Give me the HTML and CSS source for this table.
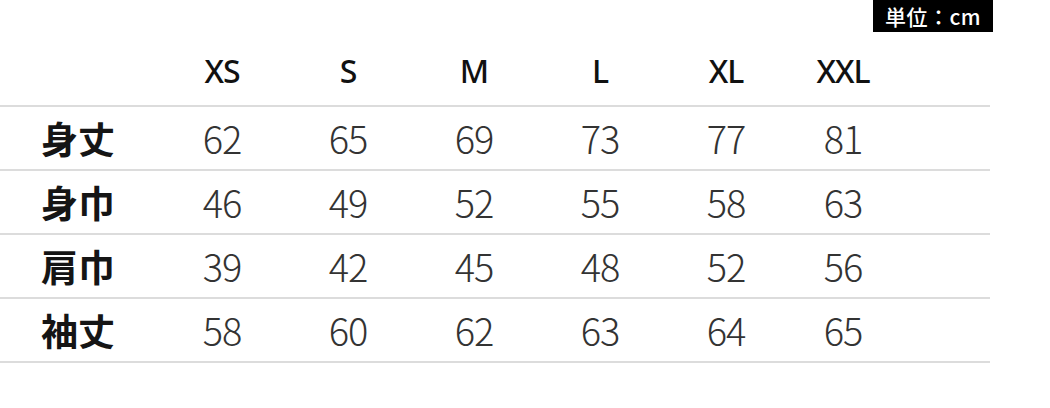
FILE: index.html
```html
<!DOCTYPE html>
<html lang="ja">
<head>
<meta charset="utf-8">
<link rel="stylesheet" href="styles.css">
</head>
<body>
<div class="page">
  <div class="unit-row"><span class="unit">単位：cm</span></div>
  <div class="table">
    <div class="row head">
      <div class="label"></div>
      <div class="cell">XS</div>
      <div class="cell">S</div>
      <div class="cell">M</div>
      <div class="cell">L</div>
      <div class="cell">XL</div>
      <div class="cell">XXL</div>
      <div></div>
    </div>
    <div class="row">
      <div class="label">身丈</div>
      <div class="cell">62</div><div class="cell">65</div><div class="cell">69</div>
      <div class="cell">73</div><div class="cell">77</div><div class="cell">81</div><div></div>
    </div>
    <div class="row">
      <div class="label">身巾</div>
      <div class="cell">46</div><div class="cell">49</div><div class="cell">52</div>
      <div class="cell">55</div><div class="cell">58</div><div class="cell">63</div><div></div>
    </div>
    <div class="row">
      <div class="label">肩巾</div>
      <div class="cell">39</div><div class="cell">42</div><div class="cell">45</div>
      <div class="cell">48</div><div class="cell">52</div><div class="cell">56</div><div></div>
    </div>
    <div class="row">
      <div class="label">袖丈</div>
      <div class="cell">58</div><div class="cell">60</div><div class="cell">62</div>
      <div class="cell">63</div><div class="cell">64</div><div class="cell">65</div><div></div>
    </div>
  </div>
</div>
</body>
</html>
```
FILE: styles.css
```css
* { box-sizing: border-box; }
html, body { margin: 0; padding: 0; background: #fff; }
body {
  width: 1050px;
  height: 408px;
  overflow: hidden;
  font-family: "Noto Sans CJK JP", "Noto Sans", sans-serif;
}
.page { display: flex; flex-direction: column; }
.unit-row {
  display: flex;
  justify-content: flex-end;
  padding-right: 57px;
  height: 32px;
}
.unit {
  background: #000;
  color: #fff;
  font-size: 21px;
  font-weight: 500;
  line-height: 32px;
  padding: 0 10px;
  width: 120px;
  text-align: center;
  letter-spacing: 0.5px;
}
.table { width: 990px; display: flex; flex-direction: column; }
.row {
  display: grid;
  grid-template-columns: 159px repeat(5, 126px) 108px 1fr;
  align-items: center;
  height: 64px;
  border-bottom: 2px solid #dcdcdc;
}
.row.head { height: 75px; }
.label {
  padding-left: 41px;
  font-size: 37px;
  font-weight: 700;
  color: #151515;
  line-height: 1;
}
.cell {
  text-align: center;
  font-size: 38px;
  font-weight: 300;
  color: #333;
  line-height: 1;
  letter-spacing: -1px;
}
.head .cell {
  font-family: "Noto Sans", sans-serif;
  font-size: 32px;
  font-weight: 500;
  color: #111;
  letter-spacing: -1px;
  padding-top: 4px;
}
```
